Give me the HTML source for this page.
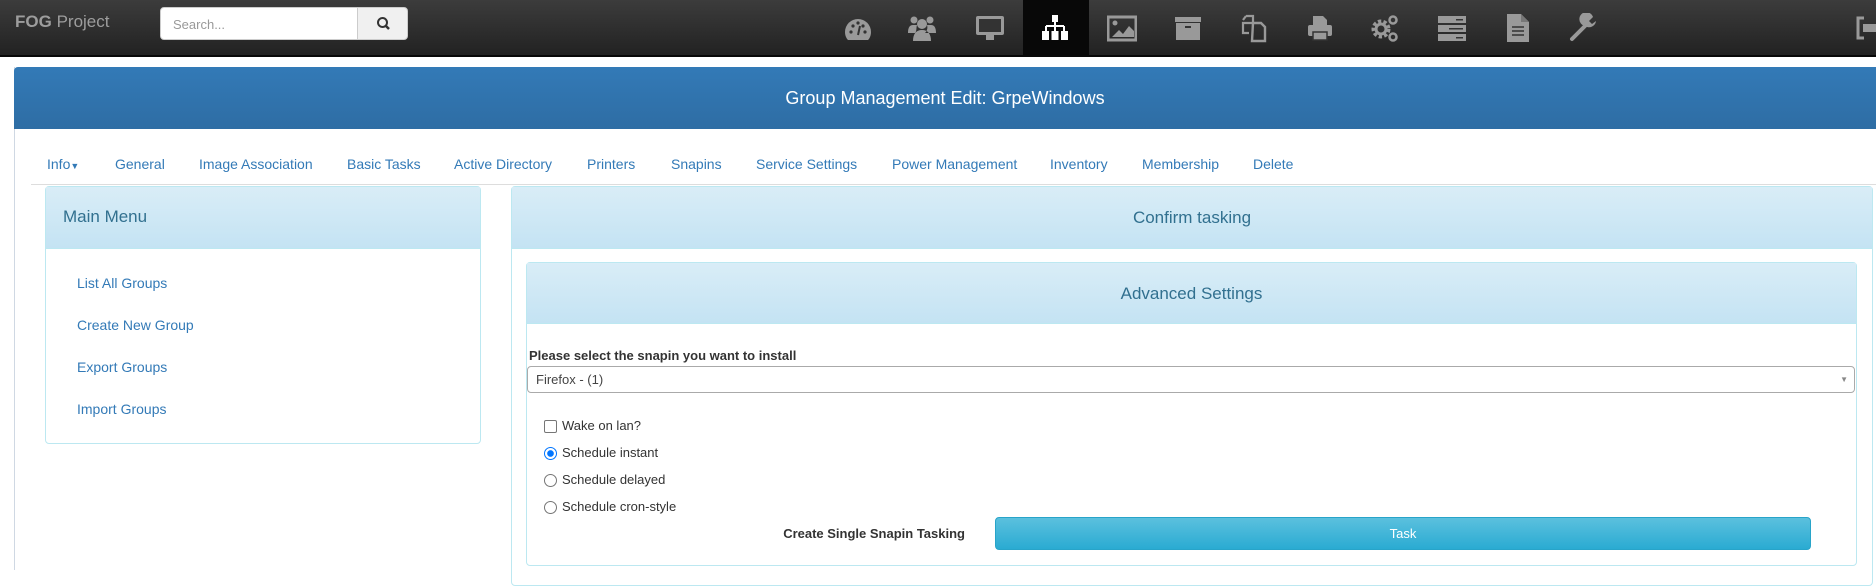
<!DOCTYPE html>
<html><head><meta charset="utf-8"><style>
*{box-sizing:border-box;margin:0;padding:0}
body{width:1876px;height:570px;overflow:hidden;background:#fff;font-family:"Liberation Sans",Arial,sans-serif;position:relative}
.a{position:absolute}
#nav{left:0;top:0;width:1876px;height:57px;background:linear-gradient(#3c3c3c,#222);border-bottom:2px solid #080808}
.brand{left:15px;top:12px;font-size:17px;color:#9d9d9d}
.brand b{color:#9d9d9d}
.search{left:160px;top:7px;width:198px;height:33px;background:#fff;border:1px solid #ccc;border-radius:4px 0 0 4px;font-size:13px;color:#999;padding:9px 12px}
.sbtn{left:357px;top:7px;width:51px;height:33px;background:#f0f0f0;border:1px solid #ccc;border-radius:0 4px 4px 0}
.ic{top:13px;width:30px;height:30px}
.act{left:1023px;top:0;width:66px;height:55px;background:#080808}
.hdr{left:14px;top:67px;width:1862px;height:62px;background:linear-gradient(#337ab7,#2e6da4);color:#fff;font-size:18px;text-align:center;line-height:62px;border-radius:4px 0 0 0}
.cont{left:14px;top:67px;width:1862px;height:503px;border-left:1px solid #cfd8e3}
.tab{top:156px;font-size:14px;color:#337ab7}
.tline{left:31px;top:184px;width:1845px;height:1px;background:#ddd}
.pan{border:1px solid #bce8f1;border-radius:4px;background:#fff}
.ph{background:linear-gradient(#d9edf7,#c4e3f3);color:#31708f;border-bottom:1px solid #bce8f1}
.lnk{left:77px;font-size:14px;color:#337ab7}
.lbl{font-size:13px;color:#333}
.rad{width:13px;height:13px;border:1px solid #767676;border-radius:50%;background:#fff}
</style></head><body>
<div id="nav" class="a"></div>
<div class="a brand"><b>FOG</b> Project</div>
<div class="a search">Search...</div>
<div class="a sbtn"><svg width="51" height="31" viewBox="0 0 51 31"><circle cx="24.5" cy="14.5" r="4.5" fill="none" stroke="#333" stroke-width="2"/><path d="M28 18l3 3" stroke="#333" stroke-width="2.5"/></svg></div>
<div class="a act"></div>
<svg class="a ic" style="left:843px" viewBox="0 0 30 30"><path d="M15 6A13 13 0 0 0 2 19c0 3 1 6 3 8h20c2-2 3-5 3-8A13 13 0 0 0 15 6z" fill="#999"/><circle cx="8" cy="19" r="1.6" fill="#333"/><circle cx="10" cy="13" r="1.6" fill="#333"/><circle cx="15" cy="10" r="1.6" fill="#333"/><circle cx="22" cy="19" r="1.6" fill="#333"/><circle cx="20" cy="13" r="1.6" fill="#333"/><path d="M15 22l2-9" stroke="#333" stroke-width="2"/></svg>
<svg class="a ic" style="left:907px" viewBox="0 0 30 30"><circle cx="7" cy="7" r="3.5" fill="#999"/><circle cx="23" cy="7" r="3.5" fill="#999"/><circle cx="15" cy="11" r="5" fill="#999"/><path d="M1 20c0-6 2-8 5-8h4c-1 3 0 6-2 8z M29 20c0-6-2-8-5-8h-4c1 3 0 6-2 8z M6 28c0-7 3-11 9-11s9 4 9 11z" fill="#999"/></svg>
<svg class="a ic" style="left:975px" viewBox="0 0 30 30"><rect x="1" y="3" width="28" height="19" rx="2" fill="#999"/><rect x="4" y="6" width="22" height="13" fill="#333"/><rect x="11" y="22" width="8" height="5" fill="#999"/></svg>
<svg class="a ic" style="left:1040px" viewBox="0 0 30 30"><rect x="12" y="2" width="6" height="7" fill="#fff"/><path d="M15 9v4M6 13h18M6 13v5M15 13v5M24 13v5" stroke="#fff" stroke-width="2" fill="none"/><rect x="2" y="18" width="7" height="9" fill="#fff"/><rect x="11.5" y="18" width="7" height="9" fill="#fff"/><rect x="21" y="18" width="7" height="9" fill="#fff"/></svg>
<svg class="a ic" style="left:1107px" viewBox="0 0 30 30"><rect x="1" y="4" width="28" height="23" fill="none" stroke="#999" stroke-width="3"/><circle cx="8" cy="10" r="2.5" fill="#999"/><path d="M5 24l7-7 4 4 6-8 5 5v6z" fill="#999"/></svg>
<svg class="a ic" style="left:1173px" viewBox="0 0 30 30"><rect x="2" y="4" width="26" height="5" fill="#999"/><rect x="3" y="10" width="24" height="17" fill="#999"/><rect x="12" y="13" width="6" height="2" fill="#333"/></svg>
<svg class="a ic" style="left:1239px" viewBox="0 0 30 30"><path d="M7 3h7v7H4v10h6M7 3L4 7" fill="none" stroke="#999" stroke-width="2.2"/><path d="M14 10h8l4 4v14H13z" fill="none" stroke="#999" stroke-width="2.4"/></svg>
<svg class="a ic" style="left:1305px" viewBox="0 0 30 30"><path d="M8 3h10l4 4v6H8z" fill="#999"/><rect x="3" y="12" width="24" height="11" rx="2" fill="#999"/><rect x="8" y="19" width="14" height="8" fill="#999" stroke="#333" stroke-width="1.5"/></svg>
<svg class="a ic" style="left:1370px" viewBox="0 0 30 30"><circle cx="11" cy="16" r="7" fill="none" stroke="#999" stroke-width="5" stroke-dasharray="3 2"/><circle cx="11" cy="16" r="5" fill="none" stroke="#999" stroke-width="3"/><circle cx="23" cy="7" r="3.5" fill="none" stroke="#999" stroke-width="2.5"/><circle cx="23" cy="24" r="3.5" fill="none" stroke="#999" stroke-width="2.5"/></svg>
<svg class="a ic" style="left:1437px" viewBox="0 0 30 30"><rect x="1" y="3" width="28" height="7" fill="#999"/><rect x="1" y="12" width="28" height="7" fill="#999"/><rect x="1" y="21" width="28" height="7" fill="#999"/><rect x="19" y="6" width="7" height="1.5" fill="#333"/><rect x="12" y="15" width="14" height="1.5" fill="#333"/><rect x="19" y="24" width="7" height="1.5" fill="#333"/></svg>
<svg class="a ic" style="left:1503px" viewBox="0 0 30 30"><path d="M4 1h14l8 8v20H4z" fill="#999"/><path d="M18 1v8h8" fill="#777"/><path d="M9 14h12M9 18h12M9 22h12" stroke="#333" stroke-width="1.6"/></svg>
<svg class="a ic" style="left:1568px" viewBox="0 0 30 30"><path d="M4 26L17 13" stroke="#999" stroke-width="4" stroke-linecap="round"/><path d="M17 13a7 7 0 1 1 8-9l-4 4 3 3 4-3a7 7 0 0 1-11 5z" fill="#999"/></svg>
<svg class="a ic" style="left:1852px" viewBox="0 0 30 30"><path d="M12 5H6v20h6" fill="none" stroke="#999" stroke-width="3"/><rect x="11" y="11" width="14" height="8" fill="#999"/></svg>
<div class="a cont"></div>
<div class="a hdr">Group Management Edit: GrpeWindows</div>
<div class="a tab" style="left:47px">Info<span style="font-size:9px">▼</span></div>
<div class="a tab" style="left:115px">General</div>
<div class="a tab" style="left:199px">Image Association</div>
<div class="a tab" style="left:347px">Basic Tasks</div>
<div class="a tab" style="left:454px">Active Directory</div>
<div class="a tab" style="left:587px">Printers</div>
<div class="a tab" style="left:671px">Snapins</div>
<div class="a tab" style="left:756px">Service Settings</div>
<div class="a tab" style="left:892px">Power Management</div>
<div class="a tab" style="left:1050px">Inventory</div>
<div class="a tab" style="left:1142px">Membership</div>
<div class="a tab" style="left:1253px">Delete</div>
<div class="a tline"></div>
<div class="a pan" style="left:45px;top:186px;width:436px;height:258px"><div class="ph" style="height:62px;font-size:17px;padding:20px 0 0 17px">Main Menu</div></div>
<div class="a lnk" style="top:275px">List All Groups</div>
<div class="a lnk" style="top:317px">Create New Group</div>
<div class="a lnk" style="top:359px">Export Groups</div>
<div class="a lnk" style="top:401px">Import Groups</div>
<div class="a pan" style="left:511px;top:186px;width:1362px;height:400px"><div class="ph" style="height:62px;font-size:17px;text-align:center;line-height:62px">Confirm tasking</div></div>
<div class="a pan" style="left:526px;top:262px;width:1331px;height:304px"><div class="ph" style="height:61px;font-size:17px;text-align:center;line-height:61px">Advanced Settings</div></div>
<div class="a lbl" style="left:529px;top:348px;font-weight:bold">Please select the snapin you want to install</div>
<div class="a" style="left:527px;top:366px;width:1328px;height:27px;border:1px solid #aaa;border-radius:4px;font-size:13px;color:#444;padding:5px 8px">Firefox - (1)<span style="position:absolute;right:6px;top:8px;font-size:8px;color:#888">▼</span></div>
<div class="a" style="left:544px;top:420px;width:13px;height:13px;border:1px solid #767676;border-radius:2px"></div>
<div class="a lbl" style="left:562px;top:418px">Wake on lan?</div>
<div class="a rad" style="left:544px;top:447px;border-color:#0075ff;background:radial-gradient(#0075ff 3px,#fff 3.6px)"></div>
<div class="a lbl" style="left:562px;top:445px">Schedule instant</div>
<div class="a rad" style="left:544px;top:474px"></div>
<div class="a lbl" style="left:562px;top:472px">Schedule delayed</div>
<div class="a rad" style="left:544px;top:501px"></div>
<div class="a lbl" style="left:562px;top:499px">Schedule cron-style</div>
<div class="a lbl" style="left:700px;width:265px;top:526px;text-align:right;font-weight:bold">Create Single Snapin Tasking</div>
<div class="a" style="left:995px;top:517px;width:816px;height:33px;background:linear-gradient(#5bc0de,#2aabd2);border:1px solid #28a4c9;border-radius:4px;color:#fff;font-size:13px;text-align:center;line-height:31px">Task</div>
</body></html>
